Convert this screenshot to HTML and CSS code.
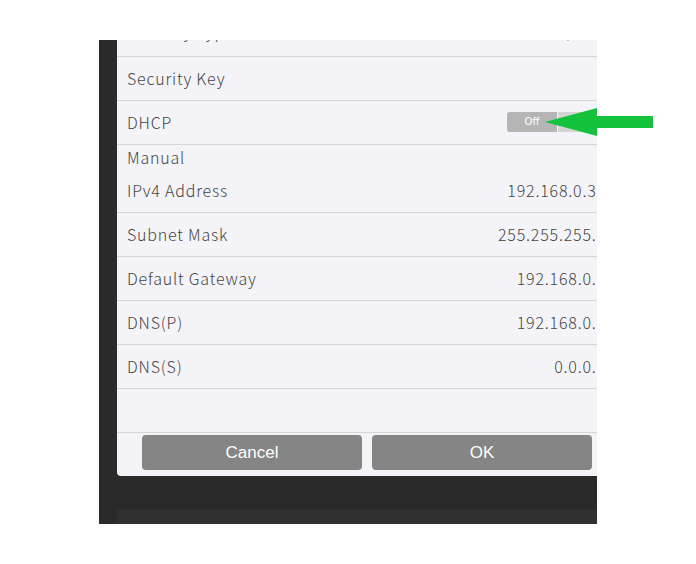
FILE: index.html
```html
<!DOCTYPE html>
<html>
<head>
<meta charset="utf-8">
<link rel="stylesheet" href="styles.css">
</head>
<body>
<div class="screen">
  <div class="dialog">
    <div class="list">
      <div class="row partial"><span class="label">Security Type</span><span class="value">WPA2-PSK (AES)</span></div>
      <div class="row"><span class="label">Security Key</span><span class="value"></span></div>
      <div class="row">
        <span class="label">DHCP</span>
        <span class="toggle"><span class="seg off">Off</span><span class="seg on"></span></span>
      </div>
      <div class="group">
        <div class="subhead">Manual</div>
        <div class="row"><span class="label">IPv4 Address</span><span class="value">192.168.0.30</span></div>
      </div>
      <div class="row"><span class="label">Subnet Mask</span><span class="value">255.255.255.0</span></div>
      <div class="row"><span class="label">Default Gateway</span><span class="value">192.168.0.1</span></div>
      <div class="row"><span class="label">DNS(P)</span><span class="value">192.168.0.1</span></div>
      <div class="row"><span class="label">DNS(S)</span><span class="value">0.0.0.0</span></div>
      <div class="row empty"></div>
    </div>
    <div class="footer">
      <button class="btn">Cancel</button>
      <button class="btn">OK</button>
    </div>
  </div>
  <div class="below"></div>
</div>
<svg class="arrow" width="110" height="30" viewBox="0 0 110 30">
  <polygon points="0,15 52,1 52,9 108,9 108,21 52,21 52,29" fill="#14c23c"/>
</svg>
</body>
</html>
```
FILE: styles.css
```css
html, body {
  margin: 0;
  padding: 0;
  background: #ffffff;
}
body {
  width: 696px;
  height: 564px;
  position: relative;
  overflow: hidden;
  font-family: "Noto Sans CJK JP", "Noto Sans", sans-serif;
}
.screen {
  margin: 40px 0 0 99px;
  width: 498px;
  height: 484px;
  overflow: hidden;
  background: #2a2a2a;
  padding-left: 18px;
  box-sizing: border-box;
}
.dialog {
  width: 500px;
  height: 436px;
  background: #f4f4f8;
  border-radius: 0 0 4px 4px;
  display: flex;
  flex-direction: column;
  overflow: hidden;
}
.list {
  margin-top: -27px;
  display: flex;
  flex-direction: column;
}
.row {
  box-sizing: border-box;
  height: 44px;
  border-bottom: 1px solid #d6d6da;
  display: flex;
  align-items: center;
  justify-content: space-between;
  padding: 0 11px 2px 10px;
  flex-shrink: 0;
}
.row.partial {
  padding-bottom: 8px;
}
.group {
  display: flex;
  flex-direction: column;
}
.subhead {
  height: 24px;
  line-height: 24px;
  padding-left: 10px;
  font-size: 16px;
  color: #444444;
  font-weight: 300;
  letter-spacing: 0.8px;
}
.label, .value {
  font-size: 16px;
  color: #444444;
  font-weight: 300;
  letter-spacing: 0.8px;
}
.toggle {
  display: flex;
  gap: 1px;
  margin-right: -2px;
}
.seg {
  height: 20px;
  display: flex;
  align-items: center;
  justify-content: center;
  font-size: 10px;
  color: #ffffff;
  font-family: "DejaVu Sans", sans-serif;
}
.seg.off {
  width: 50px;
  background: #b5b5b5;
  border-radius: 3px 0 0 3px;
}
.seg.on {
  width: 50px;
  background: #d4d4d4;
  border-radius: 0 3px 3px 0;
}
.footer {
  display: flex;
  gap: 10px;
  padding: 2px 25px 0 25px;
}
.btn {
  flex: 1;
  height: 35px;
  border: none;
  border-radius: 4px;
  background: #858585;
  color: #ffffff;
  font-family: "Liberation Sans", Arial, sans-serif;
  font-size: 17px;
  padding: 0;
}
.below {
  margin-top: 34px;
  height: 20px;
  background: #303030;
}
.arrow {
  position: absolute;
  left: 545px;
  top: 107px;
}
```
